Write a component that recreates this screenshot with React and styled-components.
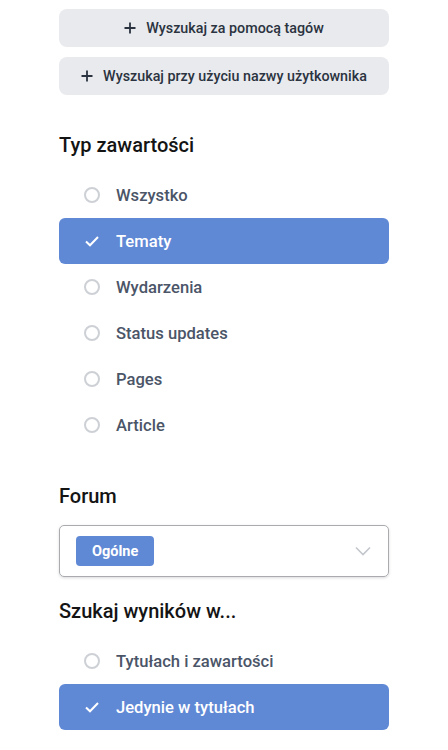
import styled, { createGlobalStyle } from "styled-components";
import { useState } from "react";

const GlobalStyle = createGlobalStyle`
  body {
    margin: 0;
    background: #fff;
    font-family: Roboto, "Noto Sans", "Liberation Sans", sans-serif;
  }
`;

const Page = styled.div`
  padding: 9px 59px 20px;
  display: flex;
  flex-direction: column;
`;

const ActionButton = styled.button`
  height: 38px;
  border: none;
  border-radius: 8px;
  background: #e9eaee;
  color: #2b3340;
  font-family: inherit;
  font-size: 14.3px;
  font-weight: 500;
  display: flex;
  align-items: center;
  justify-content: center;
  gap: 10px;
  margin-bottom: 10px;
  cursor: pointer;
`;

const Heading = styled.h3`
  margin: ${(p) => p.$top}px 0 ${(p) => p.$bottom}px;
  font-size: 20px;
  line-height: 24px;
  font-weight: 500;
  color: #141414;
`;

const OptionList = styled.div`
  display: flex;
  flex-direction: column;
`;

const Option = styled.div`
  height: 46px;
  display: flex;
  align-items: center;
  gap: 16px;
  padding-left: 25px;
  border-radius: 6px;
  background: ${(p) => (p.$active ? "#5f88d5" : "transparent")};
  color: ${(p) => (p.$active ? "#fff" : "#4b5568")};
  font-size: 16.6px;
  font-weight: 500;
  cursor: pointer;
`;

const Radio = styled.span`
  width: 16px;
  height: 16px;
  box-sizing: border-box;
  border-radius: 50%;
  border: 2px solid #cdd0d5;
`;

const Select = styled.div`
  height: 52px;
  box-sizing: border-box;
  border: 1px solid #a9abae;
  border-radius: 5px;
  box-shadow: 0 1px 3px rgba(0, 0, 0, 0.15);
  display: flex;
  align-items: center;
  justify-content: space-between;
  padding: 0 17px 0 16px;
`;

const Chip = styled.span`
  height: 30px;
  padding: 0 16px;
  display: flex;
  align-items: center;
  border-radius: 4px;
  background: #5f88d5;
  color: #fff;
  font-size: 14.5px;
  font-weight: 700;
`;

const Plus = () => (
  <svg width="12" height="12" viewBox="0 0 12 12">
    <path d="M6 0.5v11M0.5 6h11" stroke="#2b3340" strokeWidth="1.8" />
  </svg>
);

const Check = () => (
  <svg width="16" height="16" viewBox="0 0 16 16">
    <path d="M2 8.5l4 3.8L14 4" fill="none" stroke="#fff" strokeWidth="2" />
  </svg>
);

const Chevron = () => (
  <svg width="16" height="10" viewBox="0 0 16 10">
    <path d="M1 1.5l7 7 7-7" fill="none" stroke="#c3c6cc" strokeWidth="1.6" />
  </svg>
);

const typy = ["Wszystko", "Tematy", "Wydarzenia", "Status updates", "Pages", "Article"];
const zakresy = ["Tytułach i zawartości", "Jedynie w tytułach"];

const Lista = ({ items, value, onChange }) => (
  <OptionList>
    {items.map((item) => (
      <Option key={item} $active={item === value} onClick={() => onChange(item)}>
        {item === value ? <Check /> : <Radio />}
        {item}
      </Option>
    ))}
  </OptionList>
);

const App = () => {
  const [typ, setTyp] = useState("Tematy");
  const [zakres, setZakres] = useState("Jedynie w tytułach");

  return (
    <>
      <GlobalStyle />
      <Page>
        <ActionButton>
          <Plus />
          Wyszukaj za pomocą tagów
        </ActionButton>
        <ActionButton>
          <Plus />
          Wyszukaj przy użyciu nazwy użytkownika
        </ActionButton>

        <Heading $top={28} $bottom={15}>Typ zawartości</Heading>
        <Lista items={typy} value={typ} onChange={setTyp} />

        <Heading $top={36} $bottom={17}>Forum</Heading>
        <Select>
          <Chip>Ogólne</Chip>
          <Chevron />
        </Select>

        <Heading $top={22} $bottom={15}>Szukaj wyników w...</Heading>
        <Lista items={zakresy} value={zakres} onChange={setZakres} />
      </Page>
    </>
  );
};

export default App;
